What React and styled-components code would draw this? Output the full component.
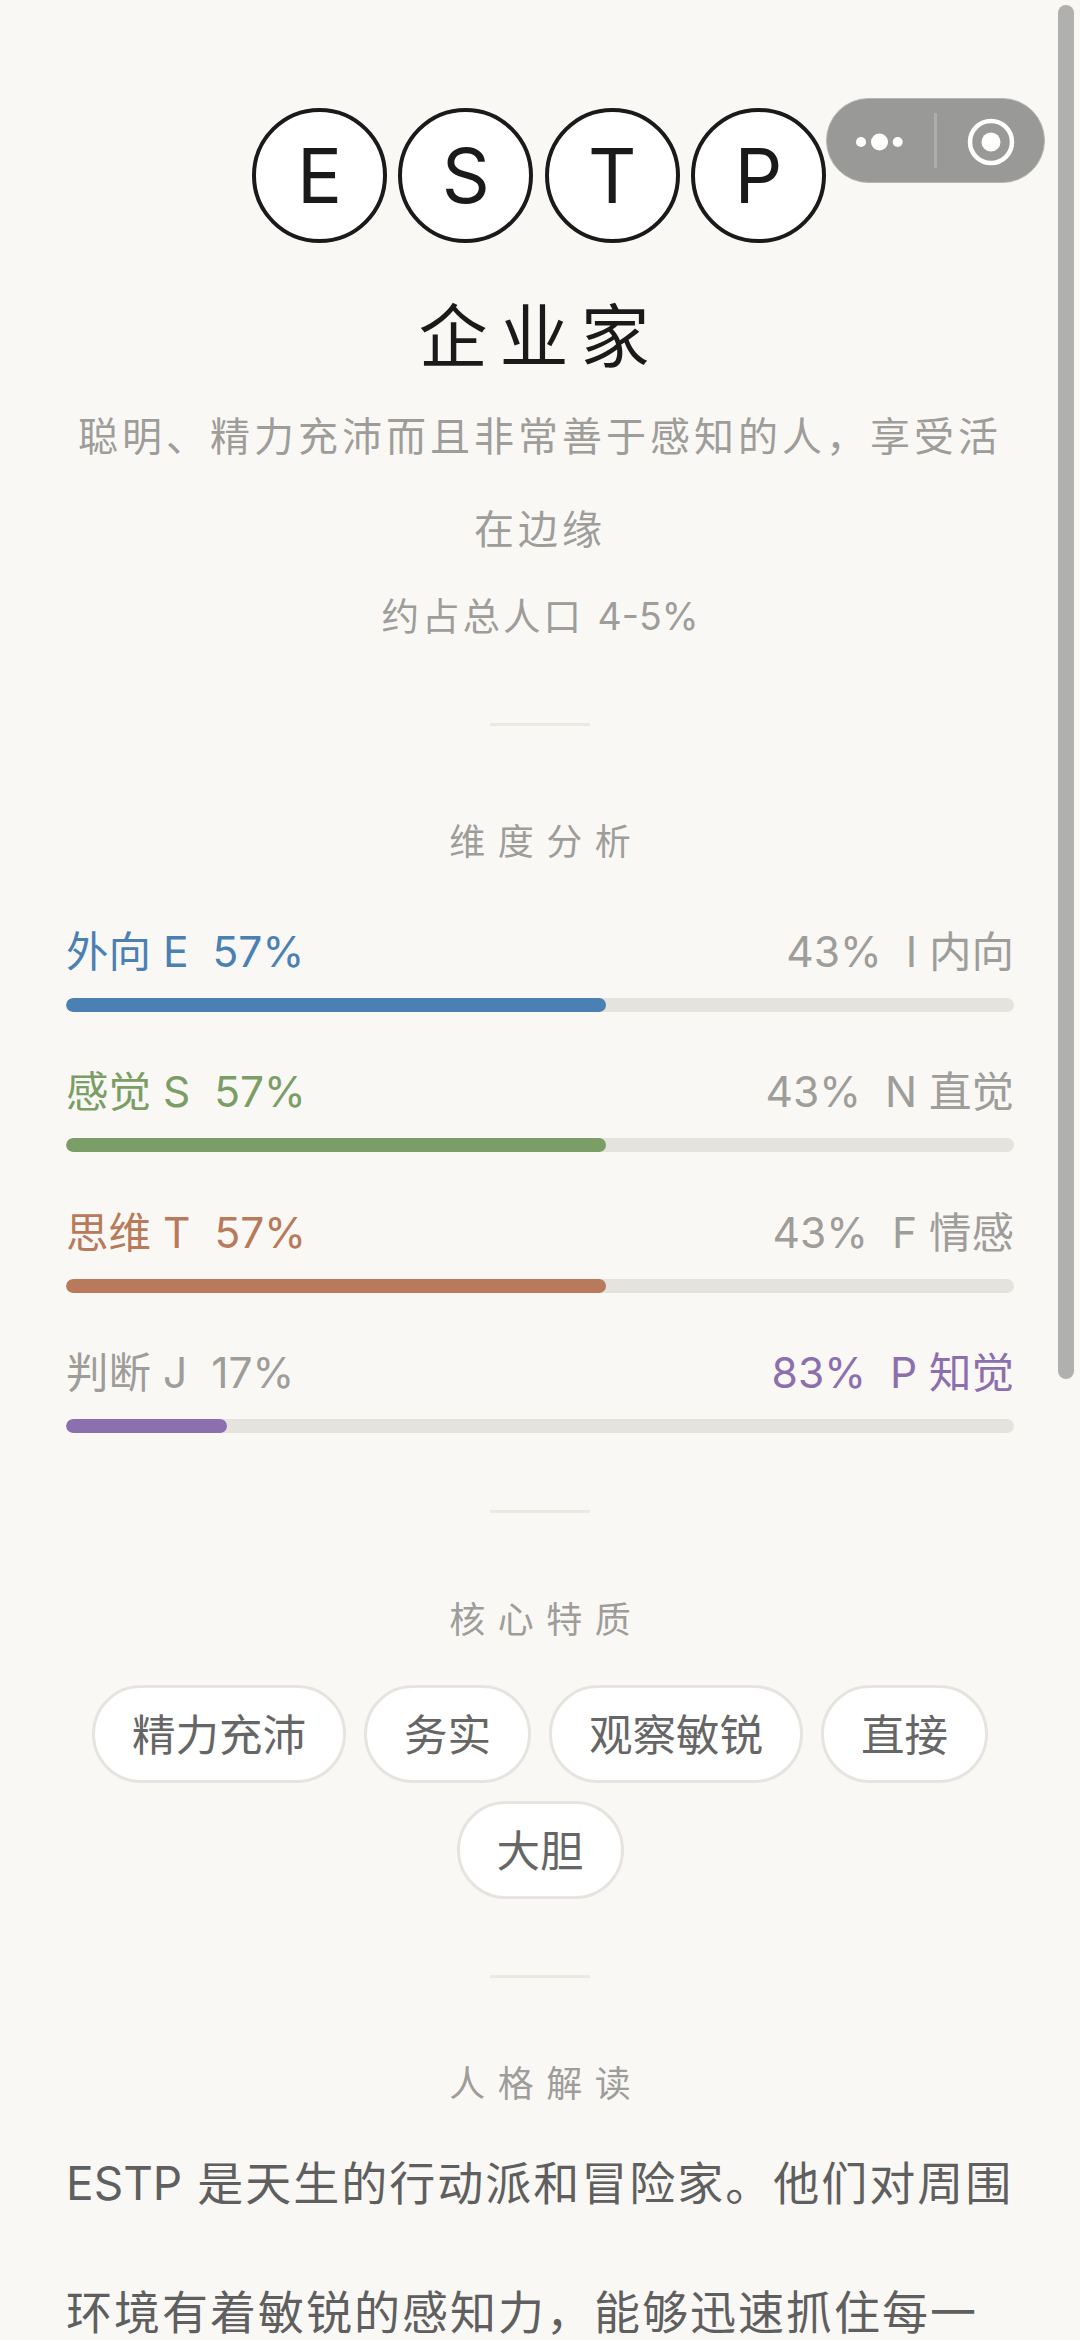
import React from 'react';
import styled, { createGlobalStyle } from 'styled-components';

const GlobalStyle = createGlobalStyle`
  html, body {
    margin: 0;
    padding: 0;
    height: 2340px;
    overflow: hidden;
    background: #faf8f5;
  }
  body {
    font-family: 'Inter', 'Noto Sans CJK SC', sans-serif;
  }
`;

const Page = styled.div`
  position: relative;
  width: 1080px;
  height: 2340px;
  overflow: hidden;
  box-sizing: border-box;
  padding: 108px 66px 0;
  background: #faf8f5;
`;

const Capsule = styled.div`
  position: absolute;
  left: 826px;
  top: 98px;
  width: 219px;
  height: 85px;
  box-sizing: border-box;
  border: 1px solid #b5b5b3;
  border-radius: 43px;
  background: #999998;
`;

const ScrollThumb = styled.div`
  position: absolute;
  left: 1058px;
  top: 5px;
  width: 16px;
  height: 1374px;
  border-radius: 8px;
  background: #b0b0ae;
`;

const Letters = styled.div`
  display: flex;
  justify-content: center;
  gap: 11.3px;
  padding-right: 2px;
`;

const Letter = styled.div`
  width: 135px;
  height: 135px;
  box-sizing: border-box;
  display: flex;
  align-items: center;
  justify-content: center;
  border: 4px solid #1a1a1a;
  border-radius: 50%;
  background: #fff;
  color: #1a1a1a;
  font-size: 75px;
  font-weight: 400;
`;

const Title = styled.h1`
  margin: 48px 0 0;
  font-size: 69px;
  font-weight: 400;
  line-height: 92px;
  letter-spacing: 12px;
  text-align: center;
  color: #1a1a1a;
`;

const Description = styled.p`
  margin: 7px 0 0;
  font-size: 40px;
  line-height: 93px;
  letter-spacing: 4px;
  text-align: center;
  color: #9e9d99;
`;

const Note = styled.p`
  margin: 11px 0 0;
  font-size: 37.5px;
  line-height: 60px;
  letter-spacing: 3px;
  text-align: center;
  color: #9e9d99;
`;

const Latin = styled.span`
  letter-spacing: 0;
`;

const Divider = styled.div`
  width: 100px;
  height: 3px;
  margin: ${p => p.$top}px auto 0;
  background: #ece9e4;
`;

const SectionTitle = styled.h2`
  margin: ${p => p.$top}px 0 0;
  font-size: 36px;
  font-weight: 400;
  line-height: 50px;
  letter-spacing: 12.5px;
  text-indent: 12.5px;
  text-align: center;
  color: #9e9d99;
`;

const Bars = styled.div`
  display: flex;
  flex-direction: column;
  gap: 50.4px;
  margin-top: 55px;
`;

const BarLabels = styled.div`
  display: flex;
  justify-content: space-between;
  font-size: 42.5px;
  font-weight: 400;
  line-height: 60px;
`;

const Side = styled.div`
  display: flex;
  gap: 24px;
  color: ${p => p.$color || '#9e9d99'};
`;

const Track = styled.div`
  height: 14px;
  margin-top: 16px;
  border-radius: 7px;
  background: #e5e3de;
  overflow: hidden;
`;

const Fill = styled.div`
  height: 100%;
  border-radius: 7px;
  background: ${p => p.$color};
`;

const Pills = styled.div`
  display: flex;
  flex-wrap: wrap;
  justify-content: center;
  gap: 18px;
  margin-top: 40px;
`;

const Pill = styled.div`
  box-sizing: border-box;
  height: 98px;
  padding: 0 37px 3px;
  display: flex;
  align-items: center;
  border: 3px solid #e7e4df;
  border-radius: 49px;
  background: #fff;
  font-size: 43.5px;
  color: #666;
`;

const Body = styled.p`
  margin: 10px 0 0;
  font-size: 46px;
  line-height: 129px;
  letter-spacing: 2px;
  color: #5f5f5f;
`;

const dimensions = [
  { left: ['外向 E', '57%'], right: ['43%', 'I 内向'], value: 57, color: '#4a80b3', strong: 'left' },
  { left: ['感觉 S', '57%'], right: ['43%', 'N 直觉'], value: 57, color: '#7a9e65', strong: 'left' },
  { left: ['思维 T', '57%'], right: ['43%', 'F 情感'], value: 57, color: '#b87a5a', strong: 'left' },
  { left: ['判断 J', '17%'], right: ['83%', 'P 知觉'], value: 17, color: '#8b6fae', strong: 'right' },
];

const traits = ['精力充沛', '务实', '观察敏锐', '直接', '大胆'];

const App = () => (
  <Page>
    <GlobalStyle />

    <Letters>
      {['E', 'S', 'T', 'P'].map(l => (
        <Letter key={l}>{l}</Letter>
      ))}
    </Letters>

    <Title>企业家</Title>
    <Description>聪明、精力充沛而且非常善于感知的人，享受活在边缘</Description>
    <Note>约占总人口 <Latin>4-5%</Latin></Note>

    <Divider $top={76} />
    <SectionTitle $top={91}>维度分析</SectionTitle>

    <Bars>
      {dimensions.map(d => (
        <div key={d.left[0]}>
          <BarLabels>
            <Side $color={d.strong === 'left' ? d.color : null}>
              <span>{d.left[0]}</span>
              <span>{d.left[1]}</span>
            </Side>
            <Side $color={d.strong === 'right' ? d.color : null}>
              <span>{d.right[0]}</span>
              <span>{d.right[1]}</span>
            </Side>
          </BarLabels>
          <Track>
            <Fill $color={d.color} style={{ width: `${d.value}%` }} />
          </Track>
        </div>
      ))}
    </Bars>

    <Divider $top={77} />
    <SectionTitle $top={82}>核心特质</SectionTitle>

    <Pills>
      {traits.map(t => (
        <Pill key={t}>{t}</Pill>
      ))}
    </Pills>

    <Divider $top={76} />
    <SectionTitle $top={81}>人格解读</SectionTitle>

    <Body><Latin>ESTP</Latin> 是天生的行动派和冒险家。他们对周围环境有着敏锐的感知力，能够迅速抓住每一</Body>

    <Capsule>
      <svg width="219" height="85" viewBox="826 98 219 85" style={{ display: 'block', margin: -1 }}>
        <circle cx="861" cy="142" r="5" fill="#fff" />
        <circle cx="879.5" cy="142" r="8.5" fill="#fff" />
        <circle cx="897.7" cy="142" r="5" fill="#fff" />
        <rect x="934" y="113" width="3" height="55" fill="#fff" opacity="0.2" />
        <circle cx="991" cy="142" r="21" fill="none" stroke="#fff" strokeWidth="4.5" />
        <circle cx="991" cy="142" r="9.5" fill="#fff" />
      </svg>
    </Capsule>
    <ScrollThumb />
  </Page>
);

export default App;
